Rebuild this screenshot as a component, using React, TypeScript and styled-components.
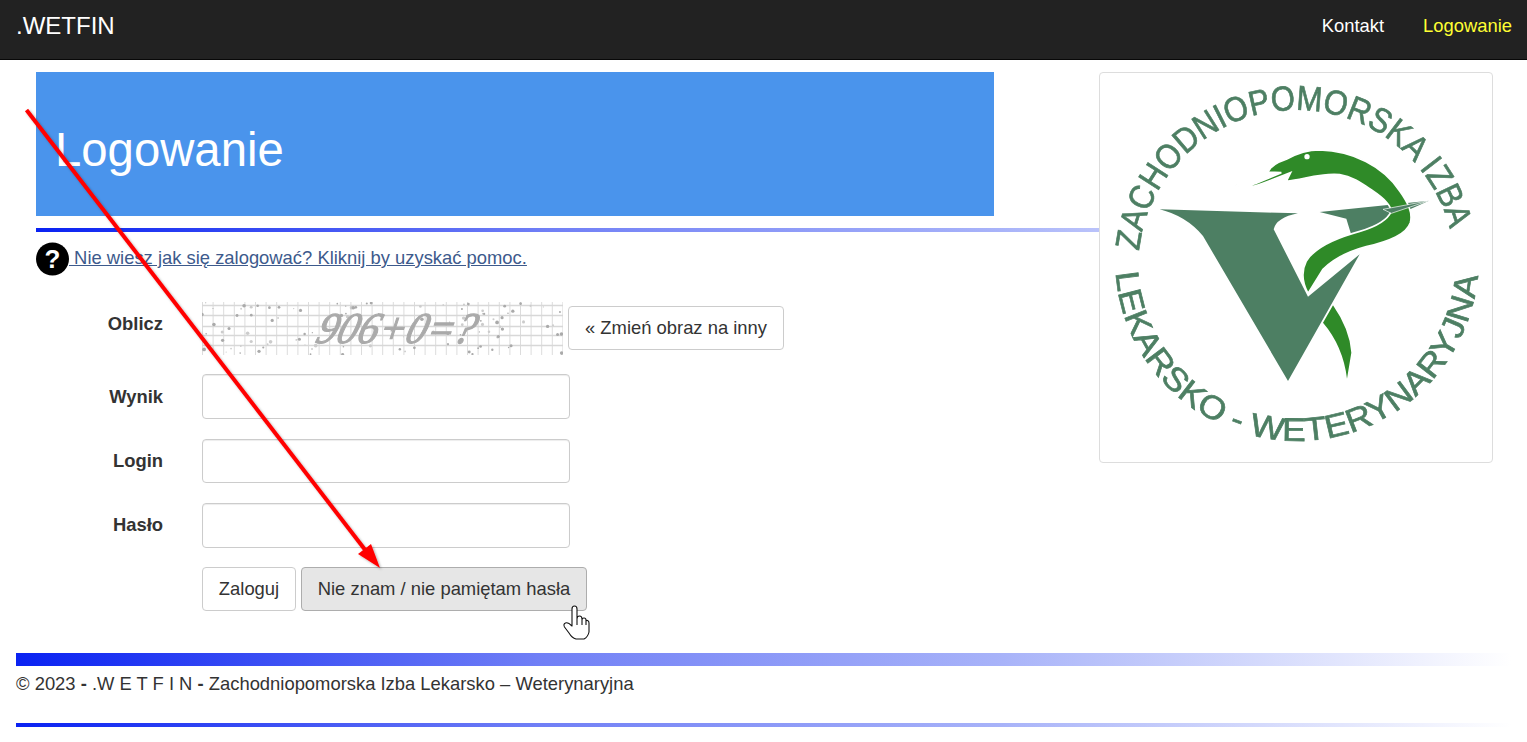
import React from "react";
import styled, { createGlobalStyle } from "styled-components";

const Global = createGlobalStyle`
  html, body { margin: 0; padding: 0; background: #fff; }
  body {
    font-family: "Liberation Sans", Arial, sans-serif;
    font-size: 18.4px;
    color: #333;
    position: relative;
  }
  * { box-sizing: border-box; }
`;

const Page = styled.div`
  position: relative;
  width: 1527px;
  height: 742px;
  overflow: hidden;
`;

const Navbar = styled.nav`
  display: flex;
  align-items: flex-start;
  justify-content: space-between;
  height: 60px;
  padding: 13px 15px 0 16px;
  background: #222;
  border-bottom: 1px solid #080808;
`;

const Brand = styled.a`
  color: #fff;
  font-size: 24px;
  line-height: 26px;
`;

const NavLinks = styled.div`
  display: flex;
  gap: 39px;
  padding-top: 3px;
`;

const NavLink = styled.a<{ $active?: boolean }>`
  color: ${(p) => (p.$active ? "#ffff33" : "#fff")};
  font-size: 18.4px;
  line-height: 20px;
`;

const Main = styled.main`
  padding: 12px 34px 0 36px;
  height: 593px;
`;

const Thumbnail = styled.div`
  float: right;
  width: 394px;
  height: 391px;
  background: #fff;
  border: 1px solid #ddd;
  border-radius: 4px;
  position: relative;
  overflow: hidden;
`;

const Jumbotron = styled.div`
  display: flex;
  align-items: center;
  width: 958px;
  height: 144px;
  padding: 12px 19px 0;
  background: #4a94ec;
`;

const Title = styled.h1`
  margin: 0;
  color: #fff;
  font-size: 47.3px;
  font-weight: 400;
  line-height: 50px;
`;

const Rule = styled.div<{ $h: number; $mt: number }>`
  height: ${(p) => p.$h}px;
  margin-top: ${(p) => p.$mt}px;
  background: linear-gradient(to right, #0a22f2 0%, #707ff6 35%, #a8b3f9 66%, #ffffff 100%);
`;

const HelpRow = styled.div`
  display: flex;
  align-items: center;
  height: 34px;
  margin-top: 10px;
`;

const HelpLink = styled.a`
  color: #3d5a8c;
  text-decoration: underline;
  font-size: 18.4px;
  line-height: 20px;
  white-space: pre;
  margin-top: -2px;
`;

const Form = styled.form`
  display: flex;
  flex-direction: column;
  margin-top: 26px;
`;

const Row = styled.div<{ $h: number; $mb: number }>`
  display: flex;
  align-items: center;
  height: ${(p) => p.$h}px;
  margin-bottom: ${(p) => p.$mb}px;
`;

const Label = styled.label<{ $shift?: number }>`
  width: 127px;
  text-align: right;
  font-weight: 700;
  font-size: 18.4px;
  margin-right: 39px;
  margin-top: ${(p) => p.$shift ?? 0}px;
`;

const Input = styled.div`
  width: 368px;
  height: 100%;
  border: 1px solid #ccc;
  border-radius: 4px;
  background: #fff;
  box-shadow: inset 0 1px 1px rgba(0, 0, 0, 0.075);
`;

const Button = styled.button<{ $hover?: boolean; $w: number }>`
  width: ${(p) => p.$w}px;
  height: 44px;
  padding: 0;
  font: 400 18.4px "Liberation Sans", Arial, sans-serif;
  color: #333;
  background: ${(p) => (p.$hover ? "#e6e6e6" : "#fff")};
  border: 1px solid ${(p) => (p.$hover ? "#adadad" : "#ccc")};
  border-radius: 4px;
`;

const CaptchaButton = styled(Button)`
  margin-left: 5px;
  margin-bottom: 1px;
`;

const ButtonRow = styled.div`
  display: flex;
  gap: 5px;
  margin-left: 166px;
`;

const Overlay = styled.svg`
  position: absolute;
  left: 0;
  top: 0;
  pointer-events: none;
`;

const Footer = styled.footer`
  padding: 0 16px;
`;

const FooterText = styled.p`
  margin: 8px 0 0;
  height: 20px;
  font-size: 18.4px;
  line-height: 20px;
`;

const FooterBar = styled(Rule)`
  width: 1495px;
`;

const logoGreen = "#4d7f63";
const snakeGreen = "#2f8a28";

function Logo() {
  return (
    <svg width="392" height="389" viewBox="31 41 1176 1167" style={{ display: "block", filter: "blur(0.6px)" }}>
      <defs>
        <path id="logoTop" d="M148 575 A475 475 0 0 1 1083 520" fill="none" />
        <path id="logoBottom" d="M78 640 A545 545 0 0 0 1165 640" fill="none" />
      </defs>
      <text fontFamily="Liberation Sans, Arial, sans-serif" fontSize="104" fill={logoGreen} stroke={logoGreen} strokeWidth="2">
        <textPath href="#logoTop" textLength="1322" lengthAdjust="spacingAndGlyphs">
          ZACHODNIOPOMORSKA IZBA
        </textPath>
      </text>
      <text fontFamily="Liberation Sans, Arial, sans-serif" fontSize="98" fill={logoGreen} stroke={logoGreen} strokeWidth="2">
        <textPath href="#logoBottom" textLength="1622" lengthAdjust="spacingAndGlyphs">
          LEKARSKO - WETERYNARYJNA
        </textPath>
      </text>
      <path
        d="M210 450 L625 462 Q560 475 552 510 L655 712 L810 585 L595 965 L340 530 Q290 470 210 450 Z"
        fill={logoGreen}
      />
      <path d="M690 458 L1018 424 L870 490 L795 560 L770 478 Z" fill={logoGreen} />
      <path
        d="M430 375 Q470 385 500 372 L575 340 L535 338 Q545 315 590 300 Q640 272 690 272 C790 275 880 320 930 395 C955 430 970 460 962 490 C950 525 900 545 830 562 C770 578 730 600 700 630 L655 702 C635 665 635 635 650 605 C675 565 730 540 790 522 C830 512 880 495 900 465 C915 445 880 415 850 395 C820 375 790 352 750 346 C700 340 650 358 590 366 L603 340 L520 372 Q470 392 430 375 Z"
        fill={snakeGreen}
        stroke="#fff"
        strokeWidth="5"
      />
      <path d="M880 450 L1018 424 L905 462 Z" fill={logoGreen} stroke="#fff" strokeWidth="2" />
      <path d="M730 738 Q780 810 785 880 L772 958 Q760 860 700 790 Z" fill={snakeGreen} />
      <circle cx="652" cy="292" r="8" fill="#fff" />
    </svg>
  );
}

function Captcha() {
  const dots: React.ReactNode[] = [];
  let seed = 17;
  const rnd = () => {
    seed = (seed * 16807) % 2147483647;
    return seed / 2147483647;
  };
  for (let i = 0; i < 130; i++) {
    const x = rnd() * 361;
    const y = rnd() * 53;
    if (x > 105 && x < 275 && y > 6 && y < 42 && rnd() > 0.25) continue;
    dots.push(<circle key={i} cx={x} cy={y} r={0.5 + rnd() * 1.4} fill={rnd() > 0.4 ? "#aaa" : "#ccc"} />);
  }
  const v: number[] = [];
  for (let x = 0.5; x < 361; x += 10.6) v.push(x);
  const h = [3, 13, 24, 33, 43];
  return (
    <svg width="361" height="53" style={{ display: "block", flex: "none" }}>
      <g style={{ filter: "blur(0.5px)" }}>
        {v.map((x) => (
          <line key={x} x1={x} x2={x} y1="0" y2="53" stroke="#dcdcdc" strokeWidth="1" />
        ))}
        {h.map((y) => (
          <line key={y} x1="0" x2="361" y1={y + 0.5} y2={y + 0.5} stroke="#d8d8d8" strokeWidth="1.4" />
        ))}
        {dots}
        <text
          x="0"
          y="0"
          transform="translate(112 41) skewX(-18)"
          fontFamily="Liberation Serif, serif"
          fontStyle="italic"
          fontSize="44"
          fill="#aaa"
          stroke="#aaa"
          strokeWidth="1.1"
          textLength="158"
          lengthAdjust="spacingAndGlyphs"
        >
          906+0=?
        </text>
      </g>
    </svg>
  );
}

function HelpIcon() {
  return (
    <svg width="33" height="34" viewBox="0 0 33 34" style={{ flex: "none" }}>
      <circle cx="16.5" cy="17" r="16.5" fill="#000" />
      <text x="16.5" y="26" textAnchor="middle" fontFamily="Liberation Sans, sans-serif" fontWeight="700" fontSize="26" fill="#fff">
        ?
      </text>
    </svg>
  );
}

export default function App() {
  return (
    <Page>
      <Global />
      <Navbar>
        <Brand>.WETFIN</Brand>
        <NavLinks>
          <NavLink>Kontakt</NavLink>
          <NavLink $active>Logowanie</NavLink>
        </NavLinks>
      </Navbar>
      <Main>
        <Thumbnail>
          <Logo />
        </Thumbnail>
        <Jumbotron>
          <Title>Logowanie</Title>
        </Jumbotron>
        <Rule $h={4} $mt={12} />
        <HelpRow>
          <HelpIcon />
          <HelpLink> Nie wiesz jak się zalogować? Kliknij by uzyskać pomoc.</HelpLink>
        </HelpRow>
        <Form>
          <Row $h={53} $mb={19}>
            <Label $shift={-9}>Oblicz</Label>
            <Captcha />
            <CaptchaButton type="button" $w={216}>« Zmień obraz na inny</CaptchaButton>
          </Row>
          <Row $h={45} $mb={20}>
            <Label>Wynik</Label>
            <Input />
          </Row>
          <Row $h={44} $mb={20}>
            <Label>Login</Label>
            <Input />
          </Row>
          <Row $h={45} $mb={19}>
            <Label $shift={-1}>Hasło</Label>
            <Input />
          </Row>
          <ButtonRow>
            <Button type="button" $w={94}>Zaloguj</Button>
            <Button type="button" $w={286} $hover>Nie znam / nie pamiętam hasła</Button>
          </ButtonRow>
        </Form>
      </Main>
      <Footer>
        <FooterBar $h={13} $mt={0} />
        <FooterText>© 2023 <b>-</b> .W E T F I N <b>-</b> Zachodniopomorska Izba Lekarsko – Weterynaryjna</FooterText>
        <FooterBar $h={4} $mt={29} />
      </Footer>
      <Overlay width="1527" height="742" viewBox="0 0 1527 742">
        <defs>
          <filter id="arrowShadow" x="-5%" y="-5%" width="110%" height="110%">
            <feDropShadow dx="1.5" dy="1.5" stdDeviation="1" floodColor="#000" floodOpacity="0.3" />
          </filter>
        </defs>
        <g filter="url(#arrowShadow)">
          <line x1="26.5" y1="110" x2="366" y2="551" stroke="#ff0000" strokeWidth="4" />
          <polygon points="380,568 358,554 371,544" fill="#ff0000" />
        </g>
        <path
          d="M572 626 L572 609 Q572 606 574.5 606 Q577 606 577 609 L577 617 L577 619 Q577 616 579.5 616 Q582 616 582 619 L582 620 Q582 618 584 618 Q586 618 586 620 L586 622 Q586 620 587.5 620.5 Q589 621 589 623 L589 632 Q588 637 584 639 L576 639 Q572 638 569 633 L564.5 627 Q563 624 565.5 623 Q568 622 572 626 Z M577 618 L577 625 M582 619 L582 625 M586 621 L586 625"
          fill="#fff"
          stroke="#111"
          strokeWidth="1.1"
          strokeLinejoin="round"
        />
      </Overlay>
    </Page>
  );
}
